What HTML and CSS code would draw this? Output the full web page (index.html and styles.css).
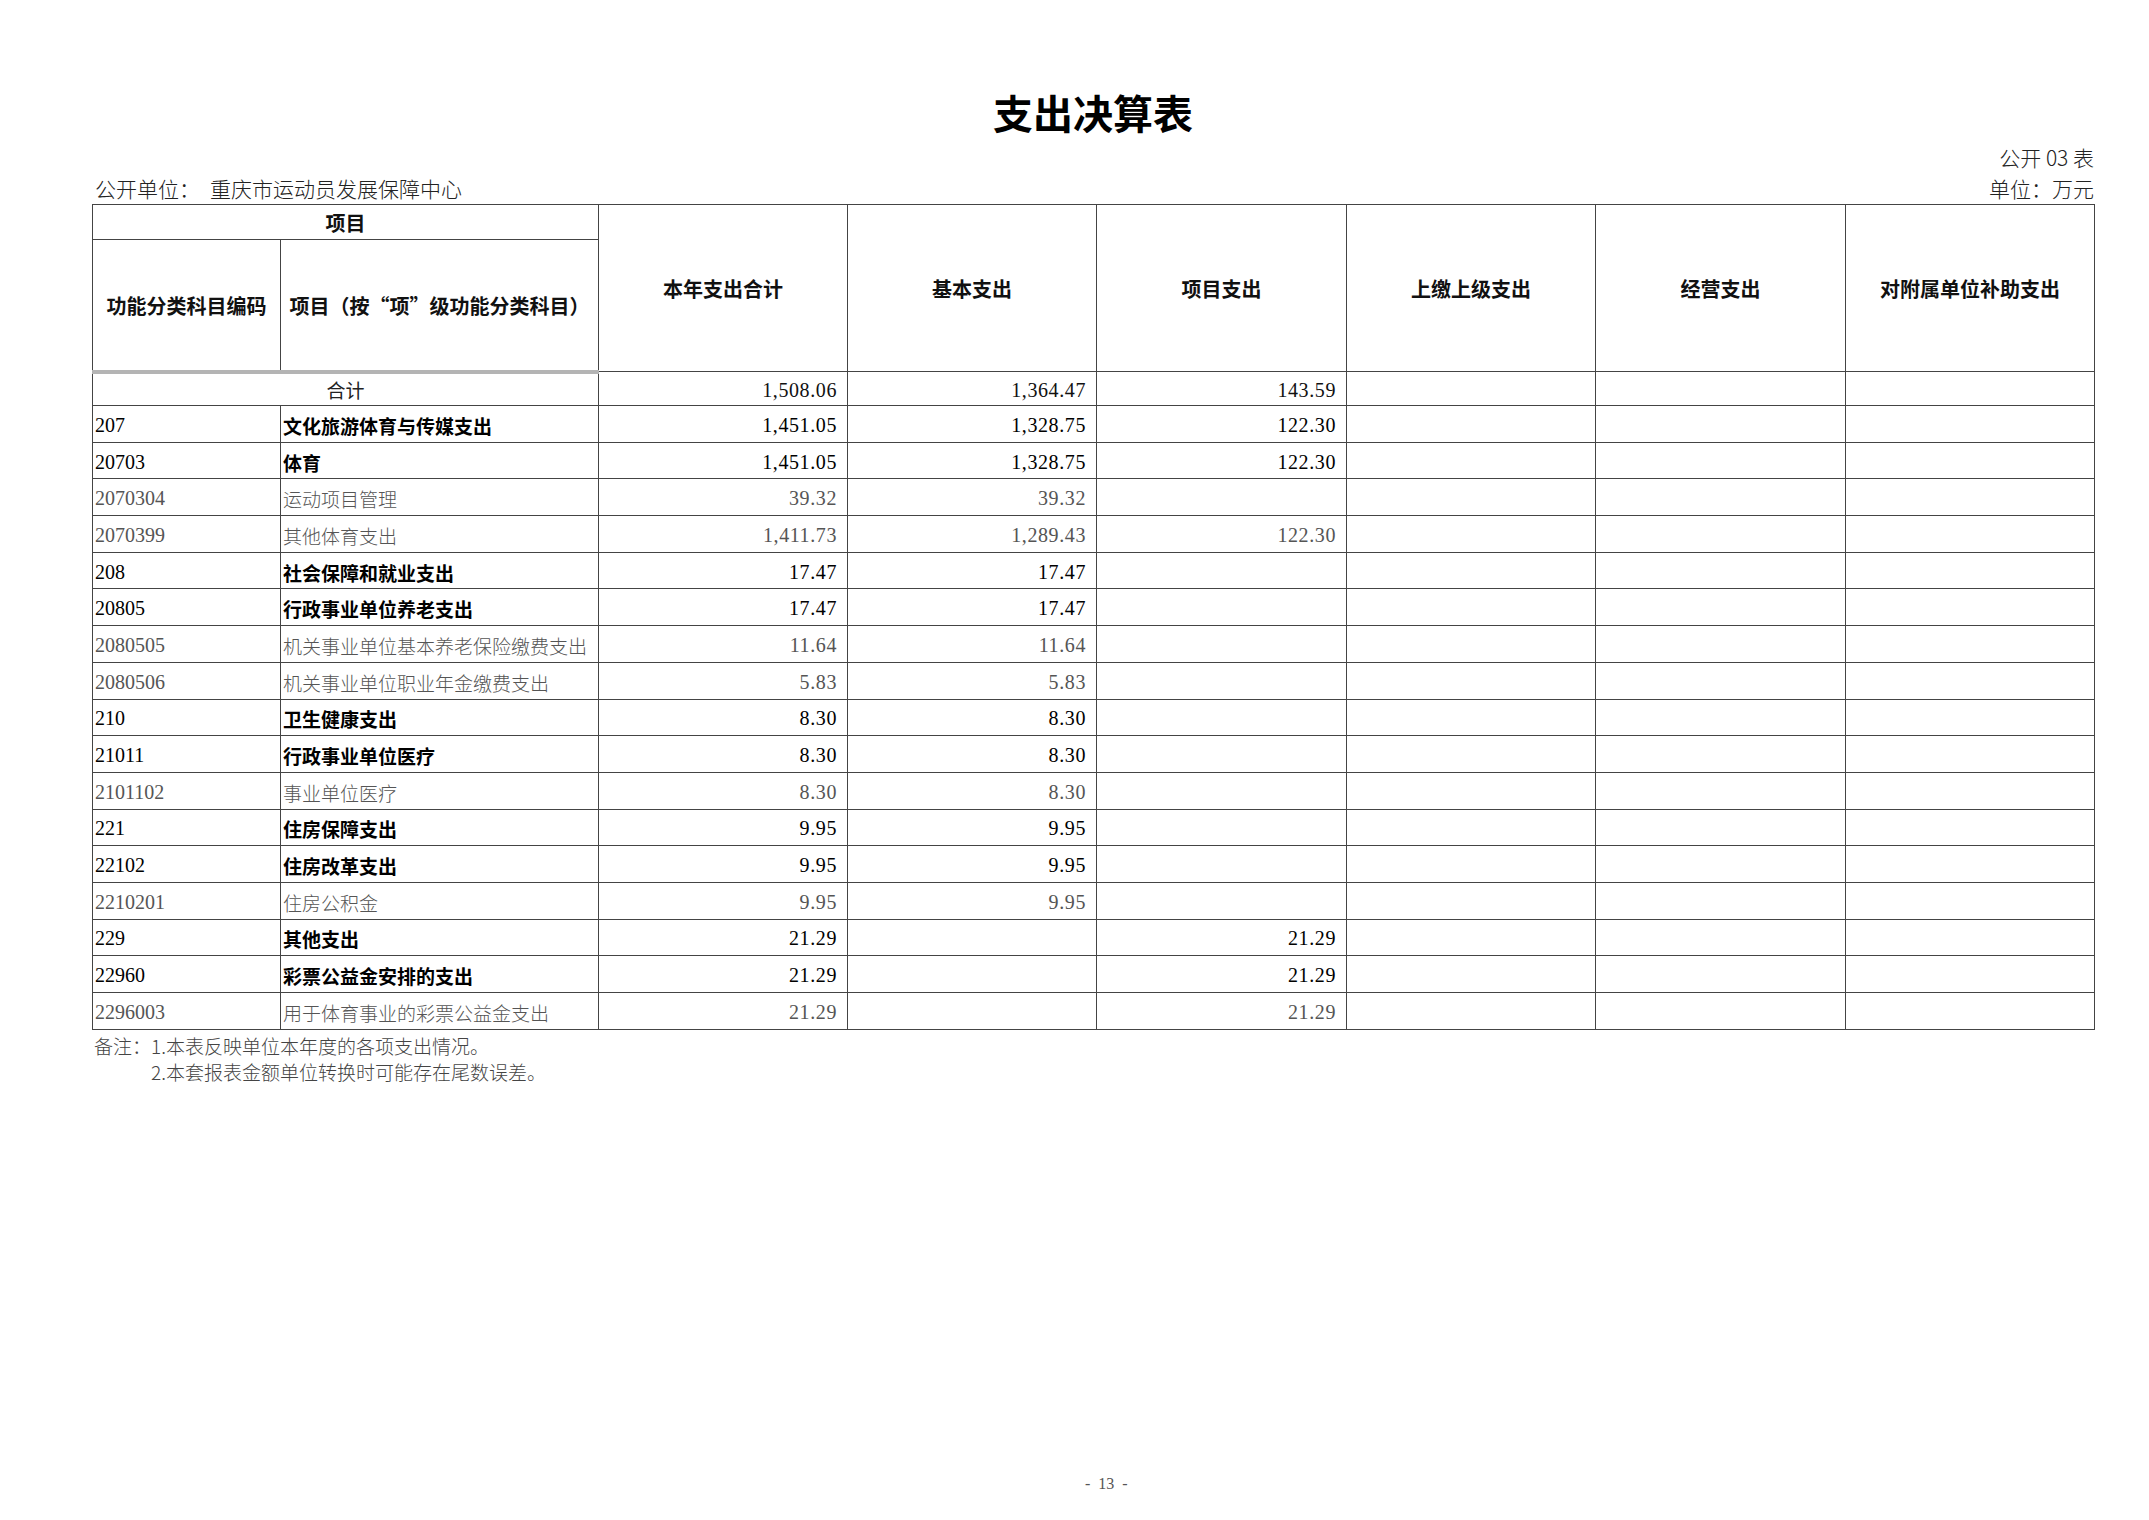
FILE: index.html
```html
<!DOCTYPE html>
<html lang="zh-CN">
<head>
<meta charset="utf-8">
<title>支出决算表</title>
<link rel="stylesheet" href="styles.css">
</head>
<body>
<div class="page">
  <h1 class="title">支出决算表</h1>
  <div class="form-no">公开 03 表</div>
  <div class="meta-row">
    <div class="unit-name"><span>公开单位：</span><span class="org">重庆市运动员发展保障中心</span></div>
    <div class="unit">单位：万元</div>
  </div>
  <table class="sheet">
    <colgroup>
      <col class="c-code"><col class="c-name"><col class="c-num"><col class="c-num"><col class="c-num5"><col class="c-num"><col class="c-num5"><col class="c-num">
    </colgroup>
    <thead>
      <tr class="h1">
        <th colspan="2">项目</th>
        <th rowspan="2">本年支出合计</th>
        <th rowspan="2">基本支出</th>
        <th rowspan="2">项目支出</th>
        <th rowspan="2">上缴上级支出</th>
        <th rowspan="2">经营支出</th>
        <th rowspan="2">对附属单位补助支出</th>
      </tr>
      <tr class="h2">
        <th class="band">功能分类科目编码</th>
        <th class="band">项目（按“项”级功能分类科目）</th>
      </tr>
    </thead>
    <tbody>
      <tr class="total">
        <td colspan="2" class="total-label">合计</td>
        <td class="num">1,508.06</td><td class="num">1,364.47</td><td class="num">143.59</td><td></td><td></td><td></td>
      </tr>
      <tr class="b"><td class="code">207</td><td class="name">文化旅游体育与传媒支出</td><td class="num">1,451.05</td><td class="num">1,328.75</td><td class="num">122.30</td><td></td><td></td><td></td></tr>
      <tr class="b"><td class="code">20703</td><td class="name">体育</td><td class="num">1,451.05</td><td class="num">1,328.75</td><td class="num">122.30</td><td></td><td></td><td></td></tr>
      <tr class="n"><td class="code">2070304</td><td class="name">运动项目管理</td><td class="num">39.32</td><td class="num">39.32</td><td class="num"></td><td></td><td></td><td></td></tr>
      <tr class="n"><td class="code">2070399</td><td class="name">其他体育支出</td><td class="num">1,411.73</td><td class="num">1,289.43</td><td class="num">122.30</td><td></td><td></td><td></td></tr>
      <tr class="b"><td class="code">208</td><td class="name">社会保障和就业支出</td><td class="num">17.47</td><td class="num">17.47</td><td class="num"></td><td></td><td></td><td></td></tr>
      <tr class="b"><td class="code">20805</td><td class="name">行政事业单位养老支出</td><td class="num">17.47</td><td class="num">17.47</td><td class="num"></td><td></td><td></td><td></td></tr>
      <tr class="n"><td class="code">2080505</td><td class="name">机关事业单位基本养老保险缴费支出</td><td class="num">11.64</td><td class="num">11.64</td><td class="num"></td><td></td><td></td><td></td></tr>
      <tr class="n"><td class="code">2080506</td><td class="name">机关事业单位职业年金缴费支出</td><td class="num">5.83</td><td class="num">5.83</td><td class="num"></td><td></td><td></td><td></td></tr>
      <tr class="b"><td class="code">210</td><td class="name">卫生健康支出</td><td class="num">8.30</td><td class="num">8.30</td><td class="num"></td><td></td><td></td><td></td></tr>
      <tr class="b"><td class="code">21011</td><td class="name">行政事业单位医疗</td><td class="num">8.30</td><td class="num">8.30</td><td class="num"></td><td></td><td></td><td></td></tr>
      <tr class="n"><td class="code">2101102</td><td class="name">事业单位医疗</td><td class="num">8.30</td><td class="num">8.30</td><td class="num"></td><td></td><td></td><td></td></tr>
      <tr class="b"><td class="code">221</td><td class="name">住房保障支出</td><td class="num">9.95</td><td class="num">9.95</td><td class="num"></td><td></td><td></td><td></td></tr>
      <tr class="b"><td class="code">22102</td><td class="name">住房改革支出</td><td class="num">9.95</td><td class="num">9.95</td><td class="num"></td><td></td><td></td><td></td></tr>
      <tr class="n"><td class="code">2210201</td><td class="name">住房公积金</td><td class="num">9.95</td><td class="num">9.95</td><td class="num"></td><td></td><td></td><td></td></tr>
      <tr class="b"><td class="code">229</td><td class="name">其他支出</td><td class="num">21.29</td><td class="num"></td><td class="num">21.29</td><td></td><td></td><td></td></tr>
      <tr class="b"><td class="code">22960</td><td class="name">彩票公益金安排的支出</td><td class="num">21.29</td><td class="num"></td><td class="num">21.29</td><td></td><td></td><td></td></tr>
      <tr class="n"><td class="code">2296003</td><td class="name">用于体育事业的彩票公益金支出</td><td class="num">21.29</td><td class="num"></td><td class="num">21.29</td><td></td><td></td><td></td></tr>
    </tbody>
  </table>
  <div class="notes">
    <p class="note">备注：1.本表反映单位本年度的各项支出情况。</p>
    <p class="note note-2">2.本套报表金额单位转换时可能存在尾数误差。</p>
  </div>
  <div class="page-no">-&nbsp;&nbsp;13&nbsp;&nbsp;-</div>
</div>
</body>
</html>
```

FILE: styles.css
```css
html, body {
  margin: 0;
  padding: 0;
  background: #ffffff;
}

.page {
  width: 2149px;
  height: 1520px;
  box-sizing: border-box;
  padding: 88px 55px 0 92px;
  font-family: "Noto Sans CJK SC", sans-serif;
  color: #222;
}

.title {
  margin: 0;
  font-size: 40px;
  line-height: 48px;
  font-weight: 700;
  text-align: center;
  color: #000;
}

.form-no {
  margin-top: 9px;
  text-align: right;
  font-size: 21px;
  line-height: 24px;
  font-weight: 300;
  color: #222;
}

.meta-row {
  margin-top: 7px;
  margin-bottom: 4px;
  display: flex;
  justify-content: space-between;
  font-size: 21px;
  line-height: 24px;
  font-weight: 300;
  color: #222;
}

.unit-name {
  padding-left: 3px;
  display: flex;
  gap: 10px;
}

.sheet {
  border-collapse: collapse;
  table-layout: fixed;
  width: 2002px;
}

.c-code { width: 188px; }
.c-name { width: 318px; }
.c-num { width: 249px; }
.c-num5 { width: 250px; }

.sheet th,
.sheet td {
  border: 1px solid #444;
  padding: 0;
  overflow: hidden;
  white-space: nowrap;
}

.sheet th {
  font-size: 20px;
  font-weight: 700;
  color: #111;
  text-align: center;
  vertical-align: middle;
}

.h1 { height: 35px; }
.h2 { height: 132px; }

.sheet th.band {
  border-bottom: 4px solid #b4b4b4;
  padding-top: 2px;
}

.sheet tbody tr { height: 36.7px; }
.sheet tbody tr.total { height: 34px; }

.sheet td {
  font-size: 19px;
  vertical-align: middle;
  padding-top: 3px;
}

.total-label {
  text-align: center;
  color: #222;
  padding-top: 0 !important;
}

.code {
  font-family: "Liberation Serif", "Noto Sans CJK SC", serif;
  padding-left: 2px !important;
  font-size: 20px !important;
}

.name {
  padding-left: 2px !important;
}

.num {
  font-family: "Liberation Serif", "Noto Sans CJK SC", serif;
  font-size: 20px !important;
  text-align: right;
  padding-right: 10px !important;
  letter-spacing: 0.6px;
}

.total .num { color: #111; }

.b .code,
.b .num { color: #000; }

.b .name {
  font-weight: 700;
  color: #000;
}

.n .code,
.n .num,
.n .name {
  color: #555;
}

.n .name { font-weight: 300; }

.notes {
  margin-top: 3px;
  padding-left: 2px;
  font-size: 19px;
  line-height: 26px;
  font-weight: 300;
  color: #444;
}

.note { margin: 0; }

.note-2 { padding-left: 57px; }

.page-no {
  margin-top: 389px;
  padding-left: 993px;
  font-family: "Liberation Serif", serif;
  font-size: 16px;
  line-height: 20px;
  color: #555;
}
```
